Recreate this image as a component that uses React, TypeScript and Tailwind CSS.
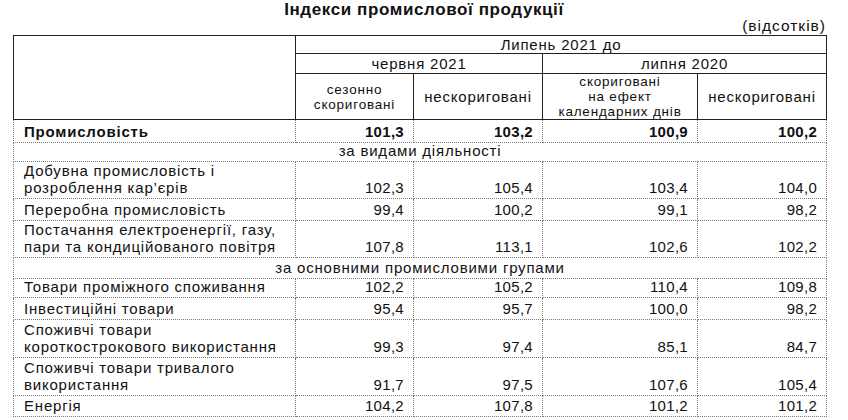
const head = 'border border-solid border-[#222] text-center align-middle p-0 font-normal';
const cell = 'border border-dotted border-[#7a7a7a] align-bottom p-0 pb-[2px]';

type Row = {
  label: string[];
  values: string[];
  h: string;
  bold?: boolean;
};

type Section = { section: string; h: string };

const rows: (Row | Section)[] = [
  { label: ['Промисловість'], values: ['101,3', '103,2', '100,9', '100,2'], h: 'h-[23px]', bold: true },
  { section: 'за видами діяльності', h: 'h-[19px]' },
  { label: ['Добувна промисловість і', 'розроблення кар’єрів'], values: ['102,3', '105,4', '103,4', '104,0'], h: 'h-[36px]' },
  { label: ['Переробна промисловість'], values: ['99,4', '100,2', '99,1', '98,2'], h: 'h-[22px]' },
  { label: ['Постачання електроенергії, газу,', 'пари та кондиційованого повітря'], values: ['107,8', '113,1', '102,6', '102,2'], h: 'h-[37px]' },
  { section: 'за основними промисловими групами', h: 'h-[21px]' },
  { label: ['Товари проміжного споживання'], values: ['102,2', '105,2', '110,4', '109,8'], h: 'h-[19px]' },
  { label: ['Інвестиційні товари'], values: ['95,4', '95,7', '100,0', '98,2'], h: 'h-[22px]' },
  { label: ['Споживчі товари', 'короткострокового використання'], values: ['99,3', '97,4', '85,1', '84,7'], h: 'h-[38px]' },
  { label: ['Споживчі товари тривалого', 'використання'], values: ['91,7', '97,5', '107,6', '105,4'], h: 'h-[38px]' },
  { label: ['Енергія'], values: ['104,2', '107,8', '101,2', '101,2'], h: 'h-[21px]' },
];

export default function App() {
  return (
    <div
      className="w-[848px] h-[420px] overflow-hidden bg-white text-[#111] text-[15px] leading-[17px] tracking-[0.8px]"
      style={{ fontFamily: '"Liberation Sans", Arial, sans-serif' }}
    >
      <h1 className="text-center text-[17px] font-bold leading-[20px] tracking-[0.6px]">
        Індекси промислової продукції
      </h1>
      <div className="w-[813px] ml-[13px]">
        <div className="text-right text-[15.5px] leading-[12px] tracking-[1px] pb-[3px]">(відсотків)</div>
        <table className="table-fixed border-collapse w-[813px]">
          <colgroup>
            <col className="w-[282px]" />
            <col className="w-[118px]" />
            <col className="w-[129px]" />
            <col className="w-[155px]" />
            <col className="w-[129px]" />
          </colgroup>
          <thead>
            <tr className="h-[18px]">
              <th rowSpan={3} className={head}></th>
              <th colSpan={4} className={`${head} leading-[16px]`}>Липень 2021 до</th>
            </tr>
            <tr className="h-[20px]">
              <th colSpan={2} className={`${head} leading-[16px]`}>червня 2021</th>
              <th colSpan={2} className={`${head} leading-[16px]`}>липня 2020</th>
            </tr>
            <tr className="h-[45px]">
              <th className={`${head} leading-[15px] text-[13.5px]`}>сезонно<br />скориговані</th>
              <th className={head}>нескориговані</th>
              <th className={`${head} leading-[15px] text-[13.5px]`}>скориговані<br />на ефект<br />календарних днів</th>
              <th className={head}>нескориговані</th>
            </tr>
          </thead>
          <tbody>
            {rows.map((r, i) =>
              'section' in r ? (
                <tr key={i} className={r.h}>
                  <td colSpan={5} className={`${cell} text-center leading-[16px]`}>{r.section}</td>
                </tr>
              ) : (
                <tr key={i} className={`${r.h} ${r.bold ? 'font-bold' : ''}`}>
                  <td className={`${cell} pl-[10px] text-left ${r.label.length > 1 ? 'pb-[1px]' : 'leading-[16px]'}`}>
                    {r.label.map((l, j) => (
                      <div key={j}>{l}</div>
                    ))}
                  </td>
                  {r.values.map((v, j) => (
                    <td key={j} className={`${cell} text-right pr-[9px] leading-[16px] tracking-[0.3px]`}>{v}</td>
                  ))}
                </tr>
              )
            )}
          </tbody>
        </table>
      </div>
    </div>
  );
}
